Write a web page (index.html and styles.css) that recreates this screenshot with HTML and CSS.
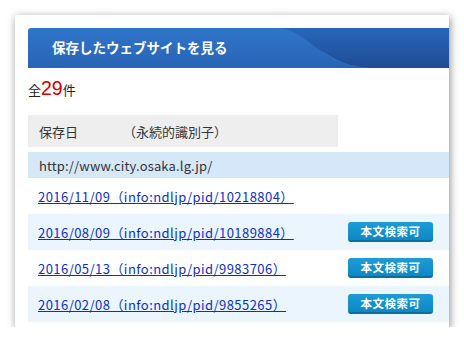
FILE: index.html
```html
<!DOCTYPE html>
<html lang="ja">
<head>
<meta charset="utf-8">
<link rel="stylesheet" href="styles.css">
</head>
<body>
<div class="panel">
  <div class="header">
    <svg class="wave" viewBox="0 0 421 40" preserveAspectRatio="none" aria-hidden="true">
      <defs>
        <linearGradient id="gl" x1="0" y1="0" x2="0" y2="1">
          <stop offset="0" stop-color="#2f75ca"/>
          <stop offset="1" stop-color="#2964b5"/>
        </linearGradient>
        <linearGradient id="gd" x1="0" y1="0" x2="0" y2="1">
          <stop offset="0" stop-color="#2866b9"/>
          <stop offset="1" stop-color="#1f4c95"/>
        </linearGradient>
      </defs>
      <rect x="0" y="0" width="421" height="40" fill="url(#gl)"/>
      <path d="M245 0 C270 0 275 12 295 24 C310 34 322 39 340 40 L421 40 L421 0 Z" fill="url(#gd)"/>
      <path d="M295 24 C310 34 322 39 340 40" fill="none" stroke="#3a78c4" stroke-width="1" opacity="0.6"/>
    </svg>
    <h1 class="title">保存したウェブサイトを見る</h1>
  </div>
  <div class="count">全<span class="num">29</span>件</div>
  <div class="thead"><span>保存日</span><span class="pid">（永続的識別子）</span></div>
  <div class="site">http://www.city.osaka.lg.jp/</div>
  <div class="row">
    <a class="link" href="#">2016/11/09（info:ndljp/pid/10218804）</a>
  </div>
  <div class="row alt">
    <a class="link" href="#">2016/08/09（info:ndljp/pid/10189884）</a>
    <span class="btn">本文検索可</span>
  </div>
  <div class="row">
    <a class="link" href="#">2016/05/13（info:ndljp/pid/9983706）</a>
    <span class="btn">本文検索可</span>
  </div>
  <div class="row alt">
    <a class="link" href="#">2016/02/08（info:ndljp/pid/9855265）</a>
    <span class="btn">本文検索可</span>
  </div>
</div>
</body>
</html>
```
FILE: styles.css
```css
html, body {
  margin: 0;
  padding: 0;
  background: #ffffff;
}
body {
  font-family: "Noto Sans CJK JP", "Noto Sans", sans-serif;
  font-size: 13px;
  color: #222;
  padding: 15px 0 0 15px;
}
.panel {
  width: 434px;
  height: 312px;
  box-sizing: border-box;
  padding: 13px 0 0 13px;
  background: #fff;
  box-shadow: 1px 2px 8px rgba(0, 0, 0, 0.45);
}
.header {
  position: relative;
  height: 40px;
  display: flex;
  align-items: center;
  border-top-left-radius: 3px;
  overflow: hidden;
}
.wave {
  position: absolute;
  left: 0;
  top: 0;
  width: 100%;
  height: 100%;
}
.title {
  position: relative;
  margin: 0 0 0 24px;
  font-size: 13.5px;
  font-weight: bold;
  color: #fff;
  line-height: 1;
}
.count {
  margin-top: 10px;
  height: 20px;
  line-height: 20px;
  font-size: 13px;
  color: #222;
}
.num {
  font-family: "Liberation Sans", Arial, sans-serif;
  font-size: 19.5px;
  color: #d40000;
}
.thead {
  margin-top: 17px;
  width: 310px;
  height: 32px;
  box-sizing: border-box;
  padding-left: 11px;
  background: #eeeeee;
  display: flex;
  align-items: center;
  color: #333;
  font-size: 13px;
}
.pid {
  margin-left: 45px;
}
.site {
  margin-top: 5px;
  height: 26px;
  box-sizing: border-box;
  padding-left: 11px;
  display: flex;
  align-items: center;
  background: #d5e8fa;
  color: #333;
  font-size: 13px;
  letter-spacing: 0.15px;
}
.row {
  height: 36px;
  box-sizing: border-box;
  padding: 0 16px 0 10px;
  display: flex;
  align-items: center;
  justify-content: space-between;
}
.row.alt {
  background: #eaf5fe;
}
.link {
  color: #0b30c8;
  text-decoration: underline;
  font-size: 13px;
  letter-spacing: 0.45px;
}
.btn {
  width: 85px;
  height: 20px;
  box-sizing: border-box;
  border-radius: 3px;
  background: linear-gradient(#1d9cd8, #0d88c4);
  border-bottom: 2px solid #0a6e9f;
  color: #fff;
  font-weight: bold;
  font-size: 11.5px;
  display: flex;
  align-items: center;
  justify-content: center;
  letter-spacing: 0.5px;
}
```
